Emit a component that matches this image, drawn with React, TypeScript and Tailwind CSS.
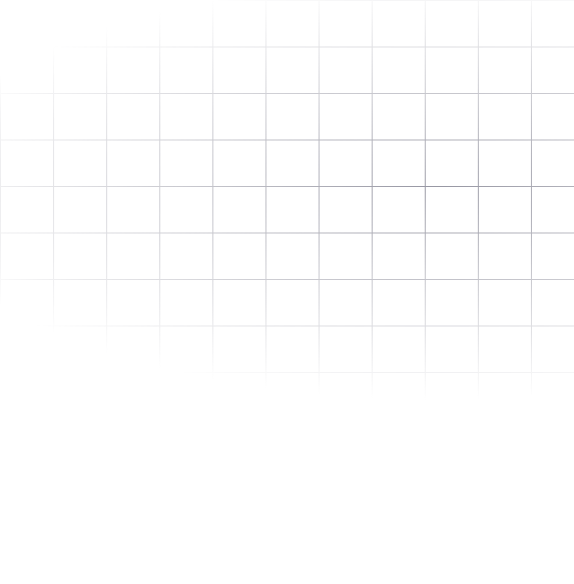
export default function App() {
  return (
    <div className="min-h-screen w-full bg-white">
      <div className="h-[584px] w-full bg-[linear-gradient(to_right,#9696a2_1px,transparent_1px),linear-gradient(to_bottom,#9696a2_1px,transparent_1px)] bg-[size:53.1px_46.5px] [mask-image:radial-gradient(ellipse_525px_210px_at_437px_190px,#000_0%,transparent_100%)] [-webkit-mask-image:radial-gradient(ellipse_525px_210px_at_437px_190px,#000_0%,transparent_100%)]" />
    </div>
  );
}
